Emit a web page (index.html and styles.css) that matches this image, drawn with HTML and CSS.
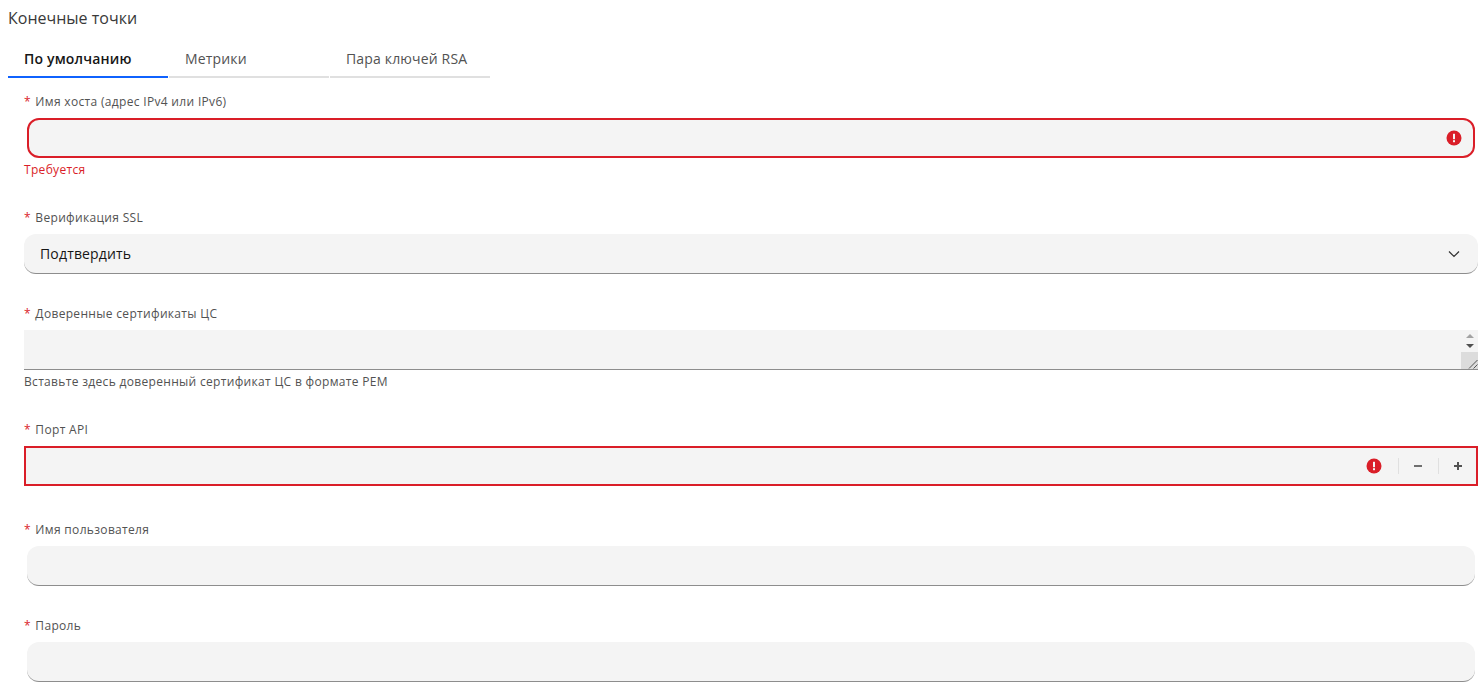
FILE: index.html
```html
<!DOCTYPE html>
<html lang="en">
<head>
    <meta charset="UTF-8">
    <meta name="viewport" content="width=device-width, initial-scale=1.0">
    <title>Конечные точки</title>
    <link rel="stylesheet" href="styles.css">
</head>
<body>

    <h1 class="page-title">Конечные точки</h1>

    <div class="tabs">
        <div class="tab active">По умолчанию</div>
        <div class="tab">Метрики</div>
        <div class="tab">Пара ключей RSA</div>
    </div>

    <form class="form">
        <!-- Hostname -->
        <div class="field field-host">
            <label class="label"><span class="req">*</span> Имя хоста (адрес IPv4 или IPv6)</label>
            <div class="input rounded inset invalid">
                <svg class="err-icon" width="16" height="16" viewBox="0 0 16 16"><circle cx="8" cy="8" r="7.500" fill="#da1e28"/><rect x="7" y="3.800" width="2" height="5.400" fill="#f4f4f4"/><rect x="7" y="10.200" width="2" height="2" fill="#f4f4f4"/></svg>
            </div>
            <div class="error-text">Требуется</div>
        </div>

        <!-- SSL -->
        <div class="field field-ssl">
            <label class="label"><span class="req">*</span> Верификация SSL</label>
            <div class="input rounded select">
                <span>Подтвердить</span>
                <svg width="16" height="16" viewBox="0 0 16 16"><path d="M3 5.500l5 5 5-5" fill="none" stroke="#333" stroke-width="1.200"/></svg>
            </div>
        </div>

        <!-- CA certs -->
        <div class="field field-ca">
            <label class="label"><span class="req">*</span> Доверенные сертификаты ЦС</label>
            <div class="input textarea">
                <div class="scrollbar">
                    <div class="arrow arrow-up"></div>
                    <div class="arrow arrow-down"></div>
                    <div class="grip">
                        <svg width="17" height="17" viewBox="0 0 17 17"><path d="M8 16.500L16.500 8M12.500 16.500l4-4" stroke="#555" stroke-width="1" fill="none"/></svg>
                    </div>
                </div>
            </div>
            <div class="helper">Вставьте здесь доверенный сертификат ЦС в формате PEM</div>
        </div>

        <!-- Port -->
        <div class="field field-port">
            <label class="label"><span class="req">*</span> Порт API</label>
            <div class="input invalid number">
                <svg class="err-icon" width="16" height="16" viewBox="0 0 16 16"><circle cx="8" cy="8" r="7.500" fill="#da1e28"/><rect x="7" y="3.800" width="2" height="5.400" fill="#f4f4f4"/><rect x="7" y="10.200" width="2" height="2" fill="#f4f4f4"/></svg>
                <span class="divider"></span>
                <span class="step step-minus"><svg width="16" height="16" viewBox="0 0 16 16"><rect x="4" y="7" width="8" height="2" fill="#6f6f6f"/></svg></span>
                <span class="divider"></span>
                <span class="step step-last"><svg width="16" height="16" viewBox="0 0 16 16"><path d="M4 7h3V4h2v3h3v2H9v3H7V9H4z" fill="#525252"/></svg></span>
            </div>
        </div>

        <!-- User -->
        <div class="field field-user">
            <label class="label"><span class="req">*</span> Имя пользователя</label>
            <div class="input rounded inset"></div>
        </div>

        <!-- Password -->
        <div class="field field-pass">
            <label class="label"><span class="req">*</span> Пароль</label>
            <div class="input rounded inset"></div>
        </div>
    </form>

</body>
</html>
```

FILE: styles.css
```css
body {
    margin: 0;
    height: 693px;
    overflow: hidden;
    background: #ffffff;
    font-family: "Open Sans", sans-serif;
    color: #525252;
}

.page-title {
    margin: 0;
    padding: 8px 8px 0;
    height: 24px;
    font-size: 16px;
    line-height: 20px;
    font-weight: 400;
    color: #393939;
}

/* Tabs */
.tabs {
    display: flex;
    gap: 1px;
    margin: 8px 0 0 8px;
}

.tab {
    width: 160px;
    box-sizing: border-box;
    height: 38px;
    padding: 9px 16px 0;
    font-size: 14px;
    line-height: 20px;
    letter-spacing: 0.16px;
    color: #525252;
    border-bottom: 2px solid #e0e0e0;
}

.tab.active {
    color: #161616;
    font-weight: 600;
    border-bottom-color: #0f62fe;
}

/* Form */
.form {
    padding: 0 3px 0 24px;
}

.field-host { margin-top: 16px; height: 99px; }
.field-ssl { margin-top: 17px; }
.field-ca { margin-top: 32px; }
.field-port { margin-top: 32px; }
.field-user { margin-top: 36px; }
.field-pass { margin-top: 32px; }

.label {
    display: block;
    height: 16px;
    margin-bottom: 8px;
    font-size: 12px;
    line-height: 16px;
    letter-spacing: 0.32px;
    color: #525252;
}

.req {
    color: #da1e28;
    margin-right: 1px;
}

.input {
    box-sizing: border-box;
    height: 40px;
    background: #f4f4f4;
    border-bottom: 1px solid #8d8d8d;
    display: flex;
    align-items: center;
    justify-content: flex-end;
}

.rounded {
    border-radius: 12px;
}

.inset {
    margin: 0 3px;
}

.input.invalid {
    border: 2px solid #da1e28;
}

.input.rounded.invalid .err-icon {
    margin-right: 11px;
}

.select {
    justify-content: space-between;
    padding: 0 16px;
    font-size: 14px;
    letter-spacing: 0.16px;
    color: #161616;
}

.textarea {
    align-items: stretch;
}

.scrollbar {
    width: 17px;
    display: flex;
    flex-direction: column;
    align-items: center;
    padding-top: 4px;
    box-sizing: border-box;
}

.arrow {
    width: 0;
    height: 0;
    border-left: 4px solid transparent;
    border-right: 4px solid transparent;
}

.arrow-up {
    border-bottom: 4px solid #a3a3a3;
    margin-bottom: 6px;
}

.arrow-down {
    border-top: 4px solid #505050;
}

.grip {
    margin-top: auto;
    width: 17px;
    height: 17px;
    background: #dcdcdc;
}

.grip svg {
    display: block;
}

.helper,
.error-text {
    margin-top: 4px;
    font-size: 12px;
    line-height: 16px;
    letter-spacing: 0.32px;
}

.error-text {
    color: #da1e28;
}

.number .err-icon {
    margin-right: 16px;
}

.divider {
    width: 1px;
    height: 16px;
    background: #e0e0e0;
}

.step {
    width: 39px;
    display: flex;
    justify-content: center;
}

.step-minus {
    box-sizing: border-box;
    padding-right: 1px;
}

.step-last {
    width: 37px;
}
```
